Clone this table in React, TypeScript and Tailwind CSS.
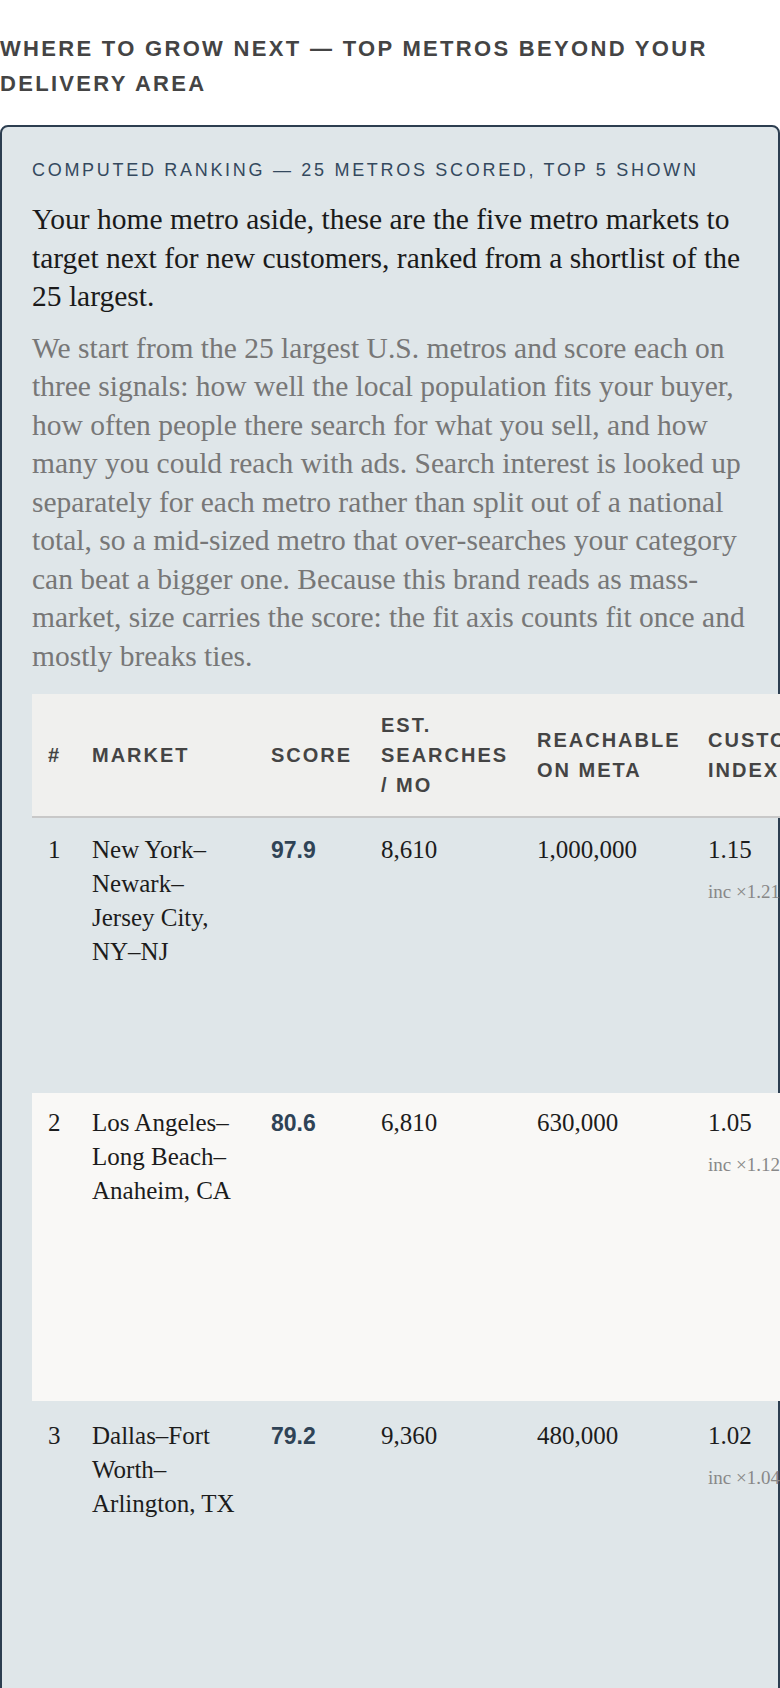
const sans = "font-['Liberation_Sans',Arial,sans-serif]";
const serif = "font-['Liberation_Serif','Times_New_Roman',serif]";

interface Metro {
  rank: number;
  market: string;
  score: string;
  searches: string;
  reach: string;
  index: string;
  inc: string;
  rowClass: string;
  padClass: string;
}

const metros: Metro[] = [
  {
    rank: 1,
    market: "New York–Newark–Jersey City, NY–NJ",
    score: "97.9",
    searches: "8,610",
    reach: "1,000,000",
    index: "1.15",
    inc: "inc ×1.21",
    rowClass: "h-[276px]",
    padClass: "pt-[15px]",
  },
  {
    rank: 2,
    market: "Los Angeles–Long Beach–Anaheim, CA",
    score: "80.6",
    searches: "6,810",
    reach: "630,000",
    index: "1.05",
    inc: "inc ×1.12",
    rowClass: "h-[308px] bg-[#f9f8f6]",
    padClass: "pt-[13px]",
  },
  {
    rank: 3,
    market: "Dallas–Fort Worth–Arlington, TX",
    score: "79.2",
    searches: "9,360",
    reach: "480,000",
    index: "1.02",
    inc: "inc ×1.04",
    rowClass: "h-[300px]",
    padClass: "pt-[18px]",
  },
];

const th = `${sans} border-b-2 border-[#c8c8c8] bg-[#f0f0ee] px-4 py-4 text-left align-middle text-[20px] font-bold uppercase leading-[30px] tracking-[0.1em] text-[#444]`;
const td = `${serif} px-4 align-top text-[25px] leading-[34px] text-[#1c1c1c]`;

export default function App() {
  return (
    <div className="min-h-screen overflow-x-hidden bg-white pt-[31px]">
      <h2
        className={`${sans} mb-[24px] text-[22px] font-bold uppercase leading-[35px] tracking-[0.105em] text-[#444]`}
      >
        Where to grow next — top metros beyond your delivery area
      </h2>

      <section className="rounded-lg border-2 border-[#2c3e50] bg-[#dfe6e9] px-[30px] pb-10 pt-[30px]">
        <p
          className={`${sans} mb-[16px] text-[18px] uppercase leading-[27px] tracking-[0.15em] text-[#34495e]`}
        >
          Computed ranking — 25 metros scored, top 5 shown
        </p>
        <p className={`${serif} text-[29.5px] leading-[38.5px] text-[#1a1a1a]`}>
          Your home metro aside, these are the five metro markets to target next
          for new customers, ranked from a shortlist of the 25 largest.
        </p>
        <p className={`${serif} mt-[13px] text-[29.5px] leading-[38.5px] text-[#777]`}>
          We start from the 25 largest U.S. metros and score each on three
          signals: how well the local population fits your buyer, how often
          people there search for what you sell, and how many you could reach
          with ads. Search interest is looked up separately for each metro
          rather than split out of a national total, so a mid-sized metro that
          over-searches your category can beat a bigger one. Because this brand
          reads as mass-market, size carries the score: the fit axis counts fit
          once and mostly breaks ties.
        </p>

        <table className="mt-[19px] w-[900px] table-fixed border-collapse">
          <colgroup>
            <col className="w-[44px]" />
            <col className="w-[179px]" />
            <col className="w-[110px]" />
            <col className="w-[156px]" />
            <col className="w-[171px]" />
            <col className="w-[240px]" />
          </colgroup>
          <thead>
            <tr>
              <th className={th}>#</th>
              <th className={th}>Market</th>
              <th className={th}>Score</th>
              <th className={th}>Est. searches / mo</th>
              <th className={th}>Reachable on Meta</th>
              <th className={th}>Customer index</th>
            </tr>
          </thead>
          <tbody>
            {metros.map((m) => (
              <tr key={m.rank} className={m.rowClass}>
                <td className={`${td} ${m.padClass}`}>{m.rank}</td>
                <td className={`${td} ${m.padClass}`}>{m.market}</td>
                <td
                  className={`${sans} ${m.padClass} px-4 align-top text-[23px] font-bold leading-[34px] text-[#2f4356]`}
                >
                  {m.score}
                </td>
                <td className={`${td} ${m.padClass}`}>{m.searches}</td>
                <td className={`${td} ${m.padClass}`}>{m.reach}</td>
                <td className={`${td} ${m.padClass}`}>
                  {m.index}
                  <div className="mt-[11px] whitespace-nowrap text-[19px] leading-[27px] text-[#888]">
                    {m.inc}
                  </div>
                </td>
              </tr>
            ))}
          </tbody>
        </table>
      </section>
    </div>
  );
}
